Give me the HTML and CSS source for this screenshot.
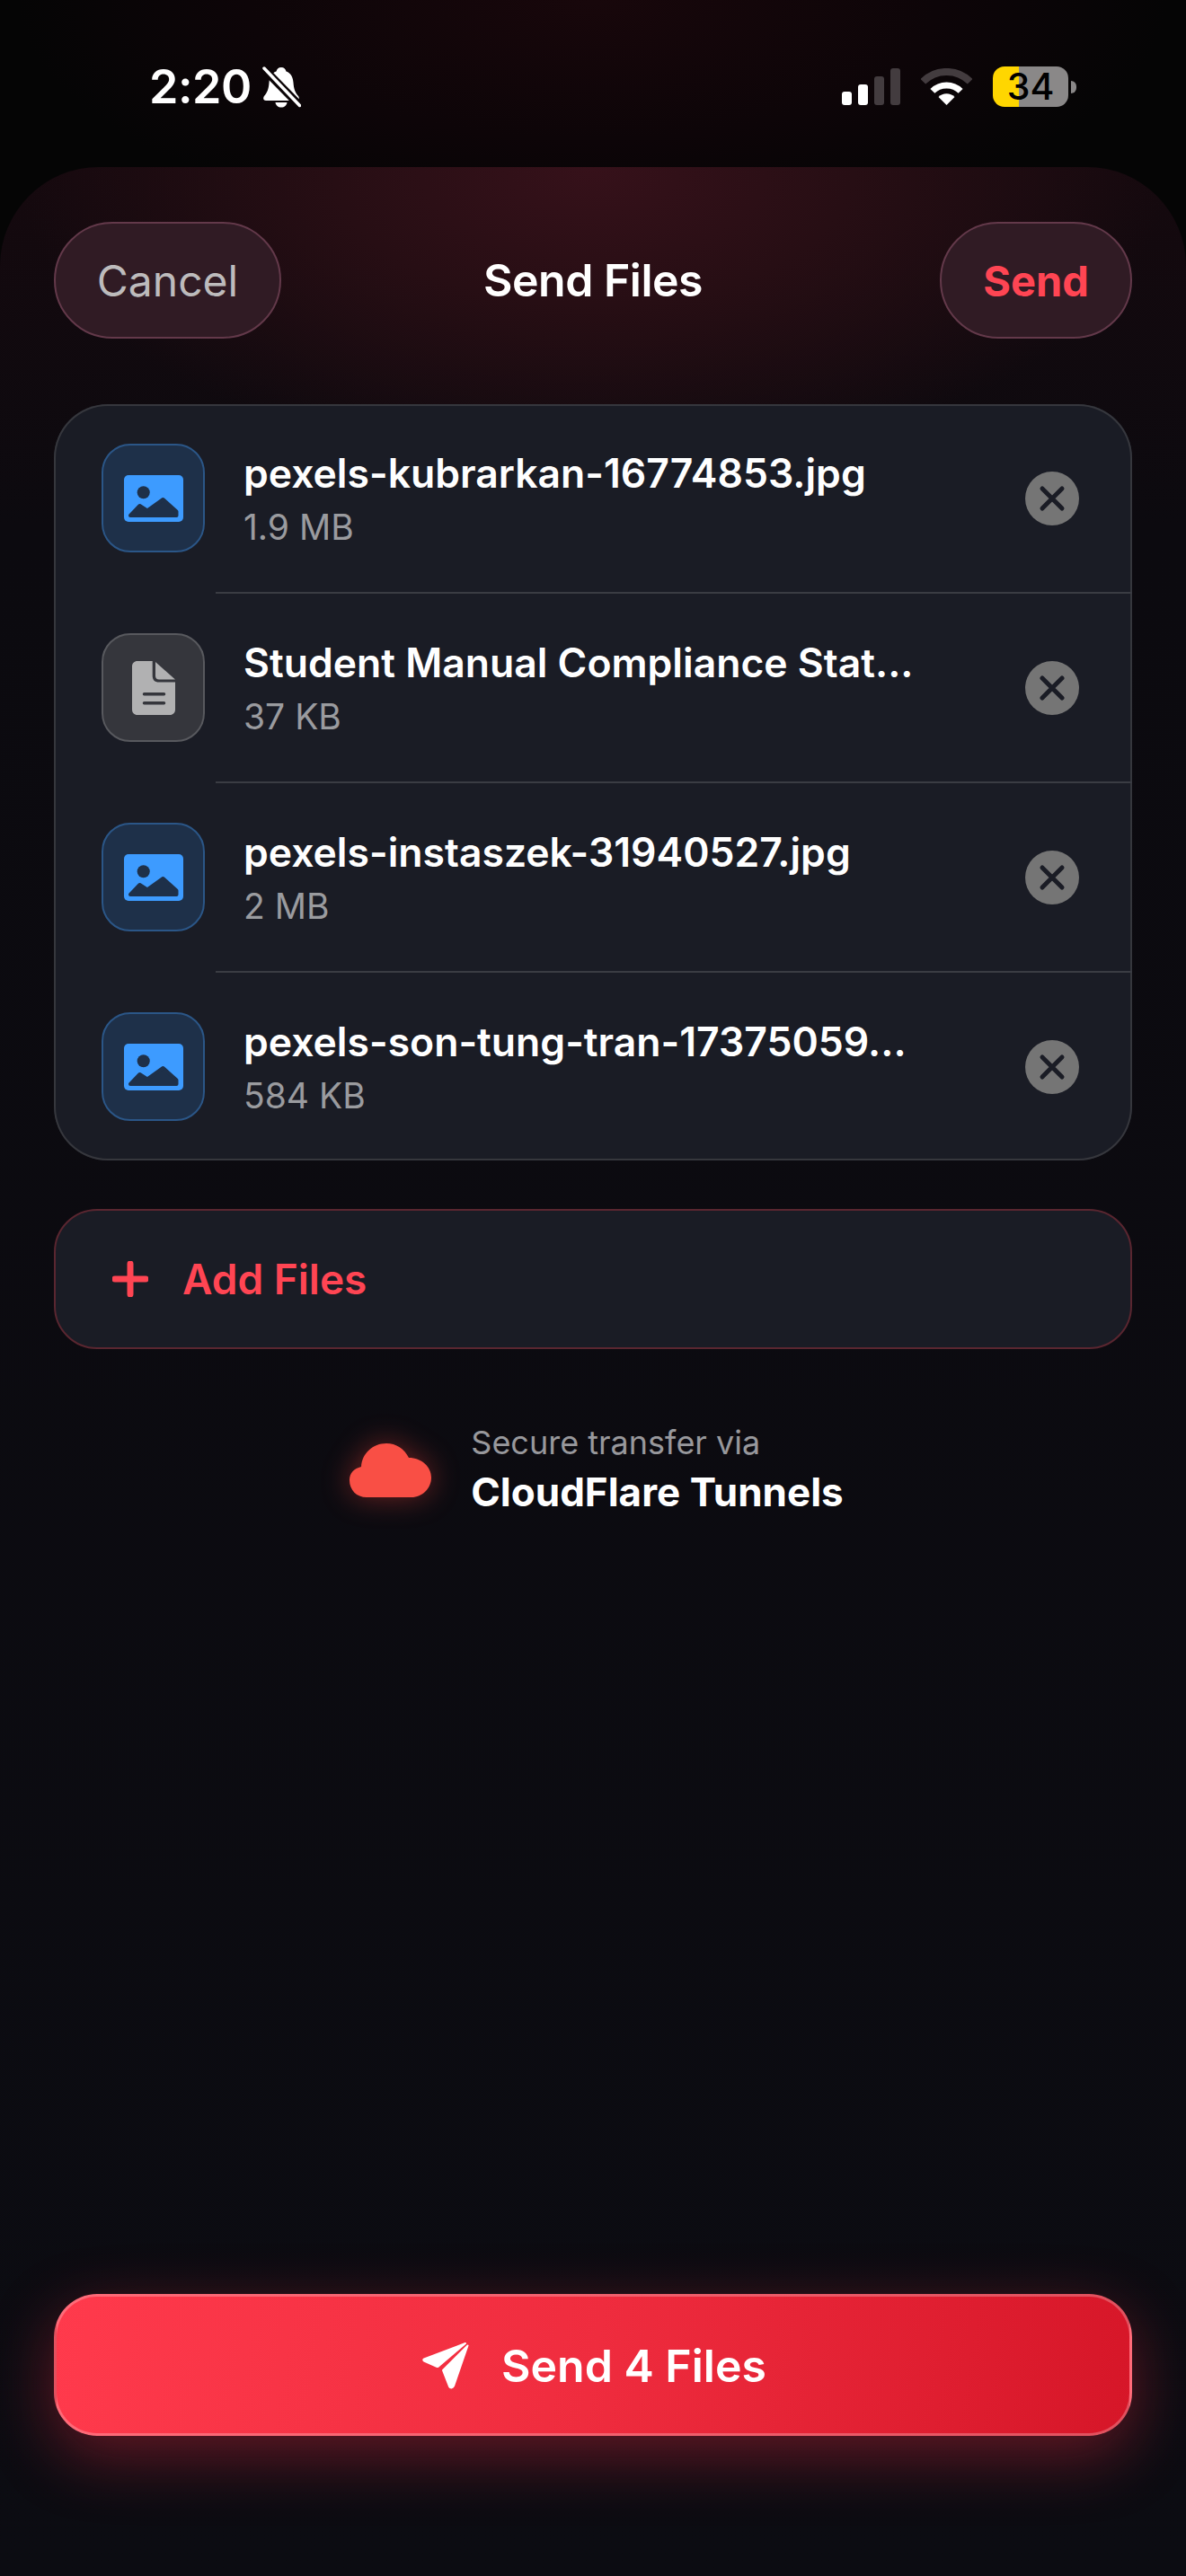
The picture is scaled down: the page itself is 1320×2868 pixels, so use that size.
FILE: index.html
```html
<!DOCTYPE html>
<html lang="en">
<head>
<meta charset="utf-8">
<title>Send Files</title>
<link rel="stylesheet" href="styles.css">
</head>
<body>
<div class="screen">
  <div class="status">
    <div class="status-left">
      <span class="time">2:20</span>
      <svg class="bell" viewBox="0 0 44 46">
        <path class="fill-white" d="M22 1c3 0 5 2 5.500 4.500C33 7.500 35 12 35.500 18c.5 7 2 11 5.500 15 1.500 2 1 5-2 5H5c-3 0-3.500-3-2-5 3.500-4 5-8 5.500-15C9 12 11 7.500 16.500 5.500 17 3 19 1 22 1z"/>
        <path class="fill-white" d="M15.500 40h13c-.5 3.500-3 5.500-6.500 5.500s-6-2-6.500-5.500z"/>
        <path class="stroke-dark" d="M0 0l44 45"/>
        <path class="stroke-white" d="M3 2l39.500 41.500"/>
      </svg>
    </div>
    <div class="status-right">
      <div class="signal">
        <i class="bar bar-1"></i><i class="bar bar-2"></i><i class="bar bar-3"></i><i class="bar bar-4"></i>
      </div>
      <svg class="wifi" viewBox="0 0 57 41">
        <path class="wifi-outer" d="M2.300 14.800A37 37 0 0 1 54.700 14.800"/>
        <path class="wifi-mid" d="M12.900 25.400A22 22 0 0 1 44.100 25.400"/>
        <path class="fill-white" d="M28.500 41L19.500 32A12.700 12.700 0 0 1 37.500 32Z"/>
      </svg>
      <div class="battery">
        <div class="battery-body">34</div>
        <i class="battery-nub"></i>
      </div>
    </div>
  </div>

  <main class="sheet">
    <header class="header">
      <button class="pill pill-cancel">Cancel</button>
      <h1 class="title">Send Files</h1>
      <button class="pill pill-send">Send</button>
    </header>

    <section class="card">
      <div class="row">
        <div class="tile tile-blue">
          <svg class="icon-image" viewBox="0 0 66 52">
            <rect class="img-bg" width="66" height="52" rx="5"/>
            <circle class="img-cut" cx="21.700" cy="19.300" r="7"/>
            <path class="img-cut img-hill" d="M7 45l10.500-11 8.500 5.500L43.500 27 58.500 40.500V45Z"/>
          </svg>
        </div>
        <div class="meta">
          <div class="name">pexels-kubrarkan-16774853.jpg</div>
          <div class="size">1.9 MB</div>
        </div>
        <div class="close"><svg viewBox="0 0 60 60"><path d="M19 19L41 41M41 19L19 41"/></svg></div>
      </div>
      <div class="divider"></div>
      <div class="row">
        <div class="tile tile-grey">
          <svg class="icon-doc" viewBox="0 0 48 60">
            <path class="doc-body" d="M6 0H22.700V16C22.700 21 25 23.500 30 23.500H48V54C48 57.500 45.500 60 42 60H6C2.500 60 0 57.500 0 54V6C0 2.500 2.500 0 6 0Z"/>
            <path class="doc-body" d="M26 1L48 20.500H30C27.500 20.500 26 19 26 16.500Z"/>
            <path class="doc-line" d="M13.500 36.700H35.500M13.500 46.700H35.500"/>
          </svg>
        </div>
        <div class="meta">
          <div class="name">Student Manual Compliance Stat...</div>
          <div class="size">37 KB</div>
        </div>
        <div class="close"><svg viewBox="0 0 60 60"><path d="M19 19L41 41M41 19L19 41"/></svg></div>
      </div>
      <div class="divider"></div>
      <div class="row">
        <div class="tile tile-blue">
          <svg class="icon-image" viewBox="0 0 66 52">
            <rect class="img-bg" width="66" height="52" rx="5"/>
            <circle class="img-cut" cx="21.700" cy="19.300" r="7"/>
            <path class="img-cut img-hill" d="M7 45l10.500-11 8.500 5.500L43.500 27 58.500 40.500V45Z"/>
          </svg>
        </div>
        <div class="meta">
          <div class="name">pexels-instaszek-31940527.jpg</div>
          <div class="size">2 MB</div>
        </div>
        <div class="close"><svg viewBox="0 0 60 60"><path d="M19 19L41 41M41 19L19 41"/></svg></div>
      </div>
      <div class="divider"></div>
      <div class="row">
        <div class="tile tile-blue">
          <svg class="icon-image" viewBox="0 0 66 52">
            <rect class="img-bg" width="66" height="52" rx="5"/>
            <circle class="img-cut" cx="21.700" cy="19.300" r="7"/>
            <path class="img-cut img-hill" d="M7 45l10.500-11 8.500 5.500L43.500 27 58.500 40.500V45Z"/>
          </svg>
        </div>
        <div class="meta">
          <div class="name">pexels-son-tung-tran-17375059...</div>
          <div class="size">584 KB</div>
        </div>
        <div class="close"><svg viewBox="0 0 60 60"><path d="M19 19L41 41M41 19L19 41"/></svg></div>
      </div>
    </section>

    <button class="add">
      <svg class="plus" viewBox="0 0 40 40"><path d="M20 3V37M3 20H37"/></svg>
      <span>Add Files</span>
    </button>

    <div class="secure">
      <svg class="cloud" viewBox="0 0 91 60">
        <path d="M19 60C8 60 0 52 0 41C0 33 5 28 13 26C14 11 26 0 41 0C52 0 61 6 66 16C80 16 91 26 91 38C91 50 81 60 69 60Z"/>
      </svg>
      <div class="secure-text">
        <div class="secure-label">Secure transfer via</div>
        <div class="secure-name">CloudFlare Tunnels</div>
      </div>
    </div>

    <button class="primary">
      <svg class="plane" viewBox="30 18 53 53">
        <path d="M33 37.500L79 20 49 45.500C48 46 47.500 46 47 45.800L33 39.500C32 39 32 38 33 37.500Z"/>
        <path d="M81.500 22.500L66 67.500C65 70 62 70 61 68L54 50 81.500 22.500Z"/>
      </svg>
      <span>Send 4 Files</span>
    </button>
  </main>
</div>
</body>
</html>
```
FILE: styles.css
```css
* { box-sizing: border-box; }

html, body {
  margin: 0;
  padding: 0;
  background: #050505;
}

.screen {
  width: 1320px;
  height: 2868px;
  overflow: hidden;
  font-family: Inter, "Liberation Sans", sans-serif;
  color: #fff;
  background: radial-gradient(ellipse 640px 260px at 50% 0, #18070b 0%, #0d0508 60%, #050505 100%), #050505;
}

/* status bar */
.status {
  height: 186px;
  padding: 74px 122px 0 166px;
  display: flex;
  justify-content: space-between;
  align-items: flex-start;
}
.status-left {
  display: flex;
  align-items: center;
  gap: 11px;
  height: 46px;
}
.time {
  font-size: 52px;
  font-weight: 600;
  line-height: 46px;
  letter-spacing: -0.5px;
}
.bell { width: 44px; height: 46px; }
.fill-white { fill: #fff; }
.stroke-white { stroke: #fff; stroke-width: 3.500; fill: none; stroke-linecap: round; }
.stroke-dark { stroke: #0b0406; stroke-width: 9; fill: none; }

.status-right {
  display: flex;
  align-items: flex-end;
  gap: 23px;
  height: 45px;
}
.signal {
  display: flex;
  align-items: flex-end;
  gap: 7px;
  height: 41px;
  margin-bottom: 2px;
}
.bar { width: 11px; border-radius: 3px; background: #433c3f; display: block; }
.bar-1 { height: 15px; background: #fff; }
.bar-2 { height: 23px; background: #fff; }
.bar-3 { height: 32px; }
.bar-4 { height: 41px; }
.wifi { width: 57px; height: 41px; margin-bottom: 2px; }
.wifi-outer { fill: none; stroke: #433c3f; stroke-width: 8; }
.wifi-mid { fill: none; stroke: #fff; stroke-width: 7; }
.battery { display: flex; align-items: center; gap: 3px; height: 45px; }
.battery-body {
  width: 84px;
  height: 45px;
  border-radius: 13px;
  background: linear-gradient(90deg, #ffd600 0, #ffd600 29px, #8a8888 29px);
  color: #000;
  font-size: 41px;
  font-weight: 500;
  line-height: 45px;
  text-align: center;
}
.battery-nub {
  display: block;
  width: 6px;
  height: 14px;
  border-radius: 0 7px 7px 0;
  background: #8a8888;
}

/* sheet */
.sheet {
  height: 2682px;
  padding: 61px 60px 156px;
  display: flex;
  flex-direction: column;
  border-radius: 110px 110px 0 0;
  background:
    radial-gradient(ellipse 640px 340px at 50% 0, #36111a 0%, #270e14 45%, rgba(26, 12, 17, 0) 100%),
    linear-gradient(180deg, #15090e 0, #0c0a0f 400px, #0c0c12 100%);
}

.header {
  display: grid;
  grid-template-columns: 1fr auto 1fr;
  align-items: center;
  height: 130px;
}
.title {
  margin: 0;
  font-size: 50px;
  font-weight: 600;
  line-height: 60px;
  letter-spacing: -0.5px;
}
.pill {
  height: 130px;
  border-radius: 65px;
  border: 2.500px solid #63394a;
  background: #301b24;
  font-family: inherit;
  padding: 0;
}
.pill-cancel {
  width: 253px;
  font-size: 48px;
  font-weight: 400;
  color: #bdbbbc;
  justify-self: start;
}
.pill-send {
  width: 214px;
  font-size: 47px;
  font-weight: 700;
  color: #ff4553;
  justify-self: end;
}

/* file card */
.card {
  margin-top: 73px;
  background: #1a1c25;
  box-shadow: inset 0 0 0 2px #36373d;
  border-radius: 60px;
  overflow: hidden;
}
.row {
  height: 209px;
  padding-left: 53px;
  padding-right: 59px;
  display: flex;
  align-items: center;
}
.divider {
  height: 2px;
  margin-left: 180px;
  background: #3a3c43;
}
.tile {
  width: 115px;
  height: 121px;
  border-radius: 32px;
  display: flex;
  align-items: center;
  justify-content: center;
  flex: none;
}
.tile-blue { background: #1e3049; border: 2.500px solid #2b5687; }
.tile-grey { background: #35363c; border: 2.500px solid #58595e; }
.icon-image { width: 66px; height: 52px; }
.img-bg { fill: #3d9bff; }
.img-cut { fill: #1e3049; }
.img-hill { stroke: #1e3049; stroke-width: 4; stroke-linejoin: round; }
.icon-doc { width: 48px; height: 60px; }
.doc-body { fill: #b1b1b2; }
.doc-line { stroke: #35363c; stroke-width: 3.500; stroke-linecap: round; fill: none; }

.meta { flex: 1; margin-left: 43px; min-width: 0; }
.name {
  font-size: 44.500px;
  font-weight: 600;
  line-height: 60px;
  white-space: nowrap;
}
.size {
  margin-top: 5px;
  font-size: 39px;
  font-weight: 400;
  line-height: 50px;
  color: #9a9b9f;
}
.close {
  width: 60px;
  height: 60px;
  border-radius: 50%;
  background: #757575;
  flex: none;
}
.close svg { display: block; width: 60px; height: 60px; }
.close path { stroke: #1a1c25; stroke-width: 5; stroke-linecap: round; fill: none; }

/* add */
.add {
  margin-top: 54px;
  height: 156px;
  background: #1a1c25;
  border: 2.500px solid #5a2630;
  border-radius: 48px;
  display: flex;
  align-items: center;
  padding: 0 0 0 63px;
  gap: 38px;
  font-family: inherit;
  font-size: 46px;
  font-weight: 600;
  color: #ff4553;
}
.plus { width: 40px; height: 40px; }
.plus path { stroke: #ff4553; stroke-width: 7; stroke-linecap: round; fill: none; }

/* secure */
.secure {
  margin-top: 80px;
  padding-left: 8px;
  display: flex;
  align-items: center;
  justify-content: center;
  gap: 44px;
}
.cloud {
  width: 91px;
  height: 60px;
  filter: drop-shadow(0 0 16px rgba(255, 70, 60, 0.4));
}
.cloud path { fill: #f94f45; }
.secure-label {
  font-size: 36px;
  font-weight: 400;
  line-height: 48px;
  color: #98989c;
}
.secure-name {
  font-size: 44px;
  font-weight: 700;
  line-height: 62px;
  color: #fff;
}

/* primary */
.primary {
  margin-top: auto;
  height: 158px;
  border-radius: 48px;
  border: 3px solid rgba(255, 255, 255, 0.25);
  background: linear-gradient(100deg, #ff3a4c 0%, #ef2c3e 50%, #d61628 100%);
  box-shadow: 0 22px 70px rgba(255, 45, 70, 0.36);
  display: flex;
  align-items: center;
  justify-content: center;
  gap: 36px;
  font-family: inherit;
  font-size: 50px;
  font-weight: 600;
  color: #fff;
  padding: 1px 0 0 2px;
}
.plane { width: 53px; height: 53px; }
.plane path { fill: #fff; stroke: #fff; stroke-width: 2; stroke-linejoin: round; }
```
